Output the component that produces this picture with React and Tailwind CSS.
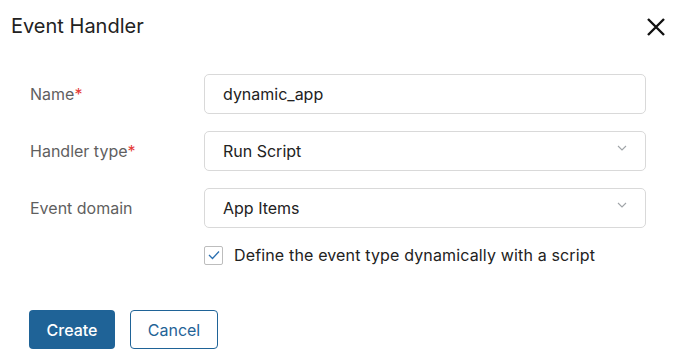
import React from "react";

function Chevron() {
  return (
    <svg width="10" height="6" viewBox="0 0 10 6" fill="none" className="mb-[6px] mr-[2px] shrink-0">
      <path d="M1 1 L5 5 L9 1" stroke="#a0a4a8" strokeWidth="1.1" />
    </svg>
  );
}

function Row({ label, required, children }) {
  return (
    <div className="flex items-center">
      <div className="w-[204px] shrink-0 pl-[30px] text-[16px] text-[#5f5f5f]">
        {label}
        {required && <span className="text-[#e53935]">*</span>}
      </div>
      {children}
    </div>
  );
}

function Field({ value, select }) {
  return (
    <div className="flex h-[40px] w-[442px] items-center justify-between rounded-[5px] border border-[#d9d9d9] pl-[18px] pr-[16px] text-[16px] text-[#222]">
      <span>{value}</span>
      {select && <Chevron />}
    </div>
  );
}

export default function App() {
  return (
    <div className="h-[356px] w-[676px] bg-white font-['Inter',sans-serif]">
      <div className="flex items-center justify-between pl-[11px] pr-[10px] pt-[13px]">
        <h1 className="text-[20px] leading-[26px] text-[#222]">Event Handler</h1>
        <svg width="20" height="20" viewBox="0 0 20 20" className="mt-[1px]">
          <path d="M2 2 L18 18 M18 2 L2 18" stroke="#111" strokeWidth="2.4" />
        </svg>
      </div>
      <div className="mt-[35px] flex flex-col gap-[17px]">
        <Row label="Name" required>
          <Field value="dynamic_app" />
        </Row>
        <Row label="Handler type" required>
          <Field value="Run Script" select />
        </Row>
        <Row label="Event domain">
          <Field value="App Items" select />
        </Row>
      </div>
      <div className="mt-[15px] flex h-[24px] items-center pl-[204px]">
        <div className="flex h-[19px] w-[19px] items-center justify-center rounded-[2px] border border-[#bdbdbd]">
          <svg width="12" height="10" viewBox="0 0 12 10" fill="none">
            <path d="M1 5 L4.5 8.5 L11 1.5" stroke="#2a6fb0" strokeWidth="1.3" />
          </svg>
        </div>
        <span className="ml-[11px] text-[16px] tracking-[0.15px] text-[#222]">Define the event type dynamically with a script</span>
      </div>
      <div className="mt-[43px] flex gap-[15px] pl-[29px]">
        <button className="h-[39px] w-[86px] rounded-[4px] bg-[#1f6397] text-[16px] font-medium text-white">Create</button>
        <button className="h-[39px] w-[88px] rounded-[4px] border border-[#1f6397] bg-white text-[16px] text-[#1f6397]">Cancel</button>
      </div>
    </div>
  );
}
